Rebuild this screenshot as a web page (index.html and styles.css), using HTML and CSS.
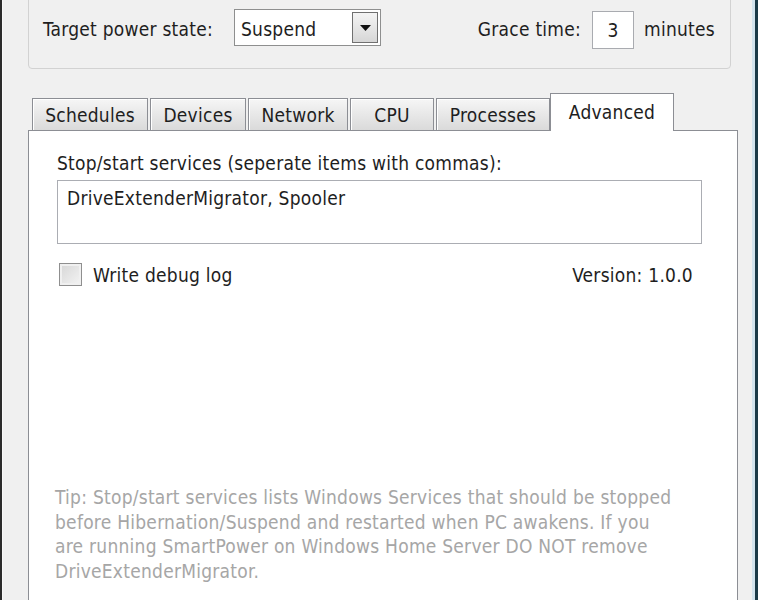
FILE: index.html
```html
<!DOCTYPE html>
<html>
<head>
<meta charset="utf-8">
<link rel="stylesheet" href="styles.css">
</head>
<body>
<div class="window">
  <div class="client">
    <div class="group">
      <div class="row">
        <span class="lbl lbl-target">Target power state:</span>
        <div class="combo">
          <span class="combo-val">Suspend</span>
          <span class="combo-btn"><svg width="11" height="6" viewBox="0 0 11 6"><path d="M0 0H11L5.5 6Z" fill="#111"/></svg></span>
        </div>
        <span class="spacer"></span>
        <span class="lbl">Grace time:</span>
        <div class="num">3</div>
        <span class="lbl">minutes</span>
      </div>
    </div>

    <div class="tab-strip">
      <div class="tab tab-schedules">Schedules</div>
      <div class="tab tab-devices">Devices</div>
      <div class="tab tab-network">Network</div>
      <div class="tab tab-cpu">CPU</div>
      <div class="tab tab-processes">Processes</div>
      <div class="tab tab-advanced active">Advanced</div>
    </div>
    <div class="panel">
      <div class="field-label">Stop/start services (seperate items with commas):</div>
      <div class="textbox">DriveExtenderMigrator, Spooler</div>
      <div class="check-row">
        <span class="checkbox"></span>
        <span class="check-label">Write debug log</span>
        <span class="spacer"></span>
        <span class="version">Version: 1.0.0</span>
      </div>
      <div class="tip">Tip: Stop/start services lists Windows Services that should be stopped<br>before Hibernation/Suspend and restarted when PC awakens. If you<br>are running SmartPower on Windows Home Server DO NOT remove<br>DriveExtenderMigrator.</div>
    </div>
  </div>
</div>
</body>
</html>
```

FILE: styles.css
```css
html, body {
  margin: 0;
  padding: 0;
  background: #f0f0f0;
}
.window {
  box-sizing: border-box;
  width: 758px;
  height: 600px;
  overflow: hidden;
  display: flex;
  background: #f0f0f0;
  border-left: 2px solid #2b2b2b;
  border-right: 3px solid #1b3a48;
  font-family: "DejaVu Sans Condensed", "DejaVu Sans", sans-serif;
  font-size: 19px;
  line-height: 23px;
  letter-spacing: 0.25px;
  color: #1e1e1e;
}
.client {
  flex: 1;
  display: flex;
  flex-direction: column;
  border-left: 1px solid #f8f8f8;
  border-right: 3px solid #d3e4ee;
}
.group {
  box-sizing: border-box;
  margin: -31px 0 0 25px;
  width: 703px;
  height: 100px;
  flex: none;
  border: 1px solid #d2d2d2;
  border-radius: 4px;
  padding: 39px 15px 0 14px;
}
.row {
  display: flex;
  align-items: center;
  height: 37px;
}
.lbl {
  padding-top: 3px;
}
.lbl-target {
  width: 191px;
}
.spacer { flex: 1; }
.combo {
  box-sizing: border-box;
  width: 147px;
  height: 37px;
  border: 1px solid #8e8f8f;
  background: #fff;
  display: flex;
  align-items: center;
  padding: 2px;
}
.combo-val {
  flex: 1;
  padding: 3px 0 0 4px;
}
.combo-btn {
  box-sizing: border-box;
  width: 26px;
  height: 31px;
  border: 1px solid #707070;
  background: linear-gradient(#f4f4f4, #e6e6e6 50%, #d6d6d6);
  display: flex;
  align-items: center;
  justify-content: center;
}
.num {
  box-sizing: border-box;
  width: 42px;
  height: 38px;
  margin: 4px 10px 0 11px;
  padding-top: 2px;
  border: 1px solid #a9abb0;
  background: #fff;
  display: flex;
  align-items: center;
  justify-content: center;
}
.tab-strip {
  display: flex;
  align-items: flex-end;
  margin: 24px 0 0 29px;
  height: 37px;
  position: relative;
  z-index: 1;
}
.tab {
  box-sizing: border-box;
  height: 32px;
  border: 1px solid #8c8e94;
  border-bottom: none;
  background: linear-gradient(#f6f6f6, #e9e9e9 45%, #dadada);
  box-shadow: inset 1px 1px 0 #fff;
  margin-right: 2px;
  text-align: center;
  line-height: 32px;
}
.tab-schedules { width: 116px; }
.tab-devices { width: 96px; }
.tab-network { width: 100px; }
.tab-cpu { width: 84px; }
.tab-processes { width: 114px; }
.tab-advanced { width: 124px; }
.tab.active {
  height: 38px;
  margin-left: -2px;
  margin-bottom: -1px;
  background: #fff;
  box-shadow: none;
  line-height: 36px;
}
.panel {
  box-sizing: border-box;
  margin-left: 25px;
  width: 710px;
  flex: 1;
  min-height: 480px;
  border: 1px solid #8c8e94;
  background: #fff;
  padding: 21px 0 0 28px;
}
.field-label {
  height: 23px;
}
.textbox {
  box-sizing: border-box;
  width: 645px;
  height: 64px;
  margin-top: 5px;
  border: 1px solid #abadb3;
  padding: 6px 9px;
}
.check-row {
  display: flex;
  align-items: center;
  width: 645px;
  height: 23px;
  margin-top: 19px;
}
.checkbox {
  box-sizing: border-box;
  width: 23px;
  height: 23px;
  margin-left: 2px;
  border: 1px solid #8f8f8f;
  background: linear-gradient(135deg, #d6d6d6, #f4f4f4);
  box-shadow: inset 0 0 0 2px #f0f0f0;
}
.check-label {
  margin-left: 11px;
  padding-top: 2px;
}
.version {
  margin-right: 9px;
  padding-top: 2px;
}
.tip {
  margin: 199px 0 0 -2px;
  color: #a6a6a6;
  line-height: 24.5px;
  white-space: nowrap;
}
```
